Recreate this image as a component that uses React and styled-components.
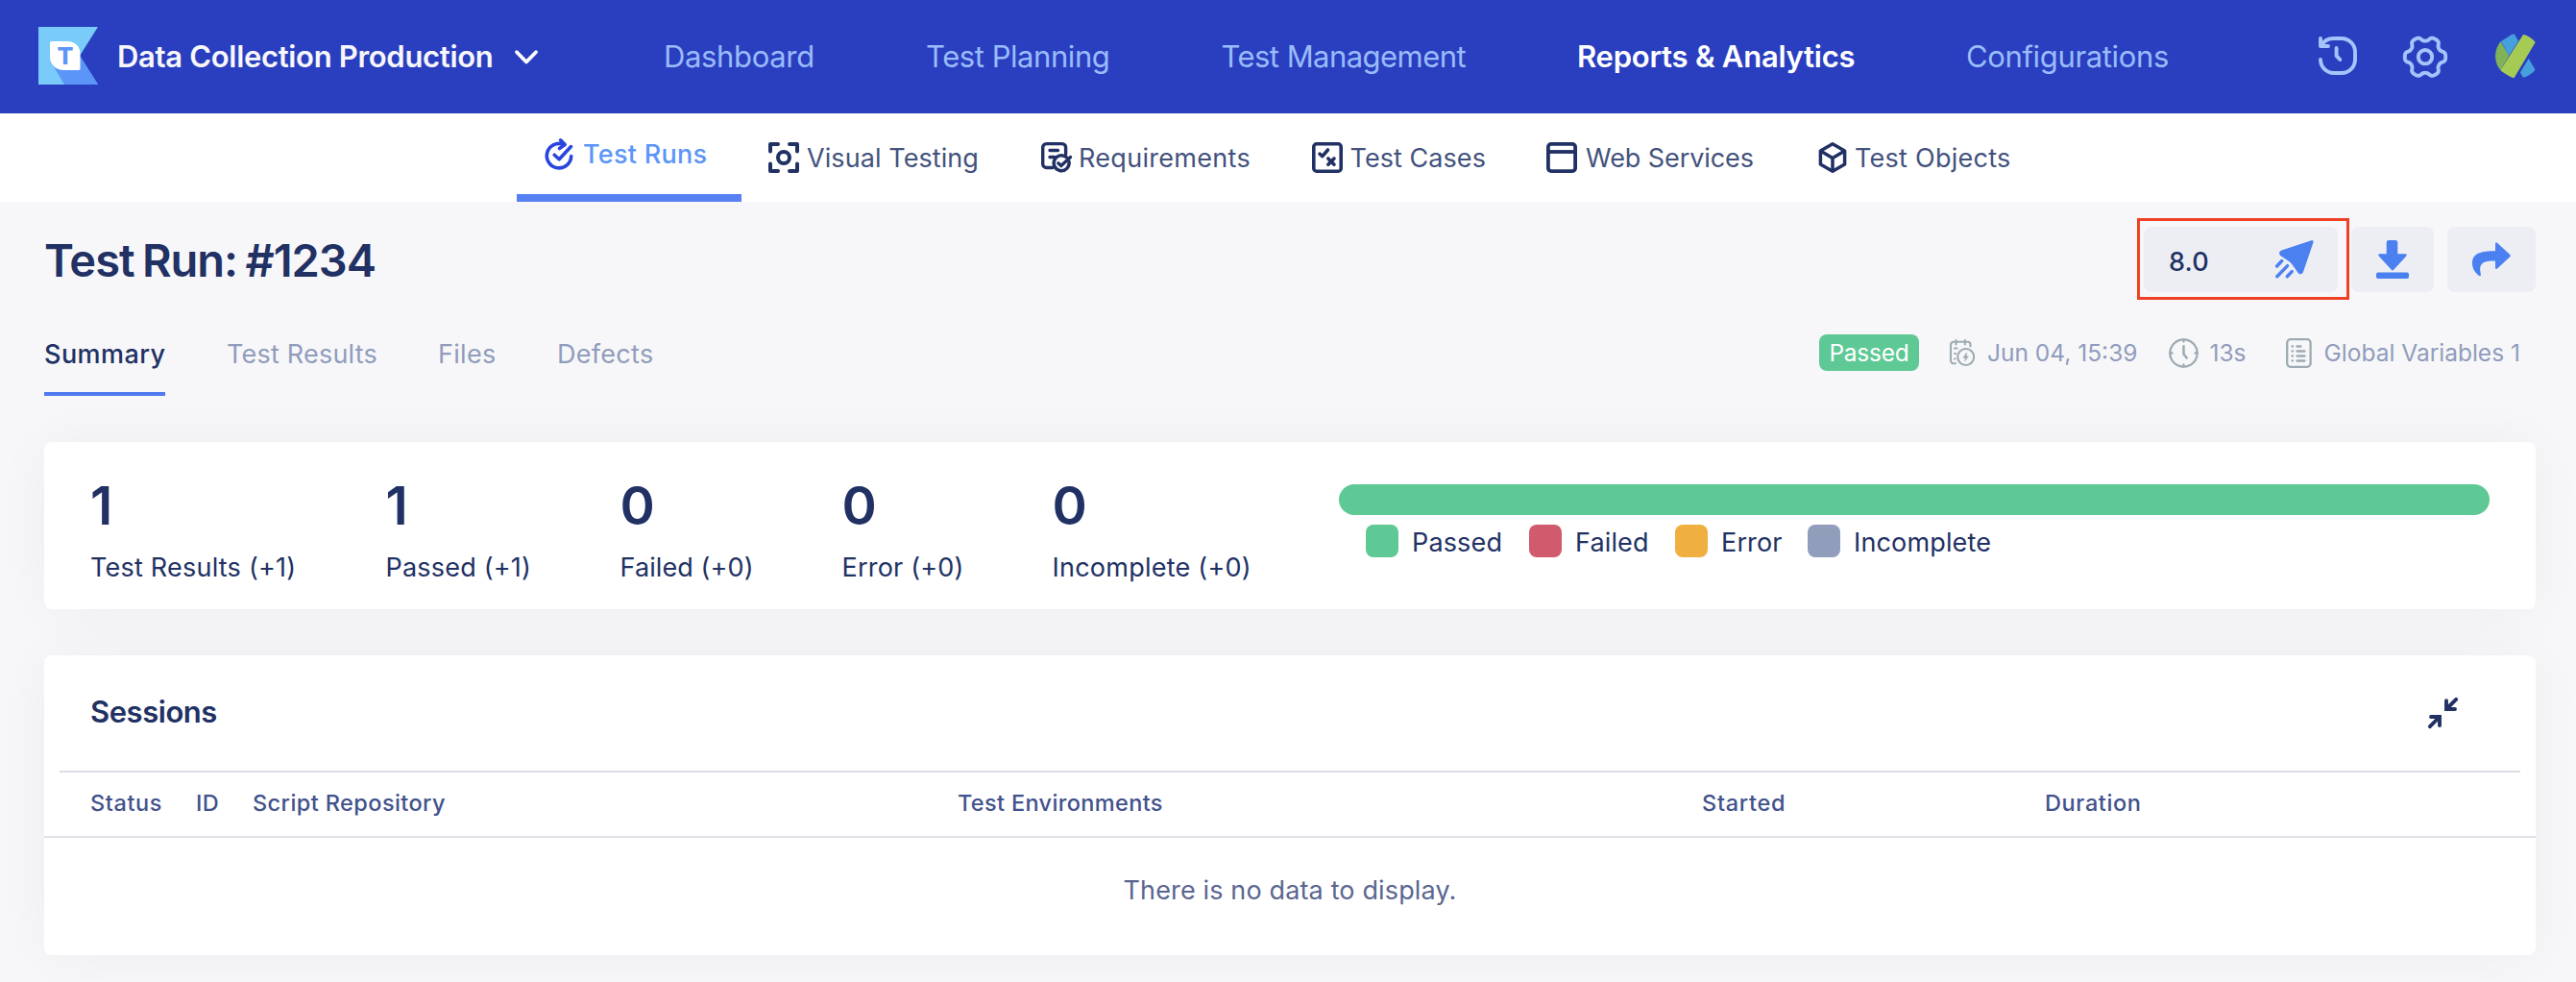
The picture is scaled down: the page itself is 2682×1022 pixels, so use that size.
import React from "react";
import styled, { createGlobalStyle } from "styled-components";

const GlobalStyle = createGlobalStyle`
  *, *::before, *::after { box-sizing: border-box; }
  body {
    margin: 0;
    background: #f7f7f9;
    color: #213164;
    font-family: Inter, "Liberation Sans", sans-serif;
  }
  svg { display: block; flex: none; overflow: visible; }
`;

const Page = styled.div`
  width: 2682px;
  height: 1022px;
  overflow: hidden;
  display: flex;
  flex-direction: column;
`;

/* ---------- top bar ---------- */

const TopBar = styled.header`
  flex: none;
  height: 118px;
  padding: 0 42px 0 40px;
  display: flex;
  align-items: center;
  background: #2a3fbf;
`;

const Brand = styled.div`
  width: 651px;
  display: flex;
  align-items: center;
`;

const BrandName = styled.span`
  width: 414px;
  margin-left: 20px;
  font-size: 31px;
  font-weight: 600;
  line-height: 40px;
  letter-spacing: -0.32px;
  white-space: nowrap;
  color: #f7f7fb;
`;

const MainNav = styled.nav`
  display: flex;
`;

const MainNavLink = styled.a`
  width: ${(p) => p.$width}px;
  font-size: 31px;
  font-weight: ${(p) => (p.$active ? 600 : 400)};
  line-height: 40px;
  letter-spacing: ${(p) => p.$track}px;
  white-space: nowrap;
  color: ${(p) => (p.$active ? "#ffffff" : "#99bcfb")};
`;

const Tools = styled.div`
  margin-left: auto;
  display: flex;
  align-items: center;
`;

const Tool = styled.div`
  margin-left: ${(p) => p.$gap}px;
  padding-bottom: ${(p) => p.$lift || 0}px;
`;

/* ---------- report type tabs ---------- */

const SubNav = styled.nav`
  flex: none;
  height: 92px;
  padding-left: 538px;
  display: flex;
  background: #ffffff;
`;

const SubNavItem = styled.a`
  width: ${(p) => p.$width}px;
  height: 92px;
  padding-left: 28px;
  display: flex;
  align-items: center;
  gap: ${(p) => p.$gap}px;
  border-bottom: ${(p) => (p.$active ? "8px solid #5780f2" : "none")};
  color: ${(p) => (p.$active ? "#5c95f8" : "#43527d")};
  font-size: 27px;
  font-weight: ${(p) => (p.$active ? 500 : 400)};
  letter-spacing: ${(p) => p.$track}px;
  line-height: 32px;
  white-space: nowrap;
`;

const SubNavLabel = styled.span`
  padding-top: 2px;
`;

/* ---------- page heading ---------- */

const Content = styled.main`
  padding: 26px 42px 0 46px;
  display: flex;
  flex-direction: column;
`;

const TitleRow = styled.div`
  height: 68px;
  display: flex;
  align-items: center;
  justify-content: space-between;
`;

const Title = styled.h1`
  margin: 2px 0 0;
  font-size: 47px;
  font-weight: 600;
  line-height: 60px;
  letter-spacing: -1px;
  word-spacing: -2.5px;
`;

const Actions = styled.div`
  display: flex;
  gap: 14px;
`;

const ActionButton = styled.div`
  position: relative;
  width: ${(p) => p.$width}px;
  height: 68px;
  display: flex;
  align-items: center;
  justify-content: center;
  border-radius: 8px;
  background: #edeef4;
`;

const ReleaseButton = styled(ActionButton)`
  justify-content: space-between;
  padding: 0 25px 0 26px;
  font-size: 27px;
  font-weight: 500;
  letter-spacing: 0.2px;
`;

const ReleaseName = styled.span`
  padding-top: 5px;
  line-height: 32px;
`;

const Highlight = styled.div`
  position: absolute;
  inset: -9px -12px -8px -7px;
  border: 3px solid #ee4126;
`;

const TabRow = styled.div`
  height: 64px;
  margin-top: 44px;
  display: flex;
  justify-content: space-between;
  align-items: flex-start;
`;

const Tabs = styled.div`
  display: flex;
  gap: 64px;
`;

const Tab = styled.a`
  width: ${(p) => p.$width}px;
  height: 64px;
  padding-top: 5px;
  border-bottom: 4px solid ${(p) => (p.$active ? "#5179f0" : "transparent")};
  font-size: 27px;
  font-weight: ${(p) => (p.$active ? 500 : 400)};
  line-height: 32px;
  letter-spacing: ${(p) => p.$track}px;
  white-space: nowrap;
  color: ${(p) => (p.$active ? "#213164" : "#909cbc")};
`;

const Meta = styled.div`
  height: 38px;
  display: flex;
  align-items: center;
  font-size: 24.5px;
  line-height: 38px;
  color: #909cbc;
  white-space: nowrap;
`;

const StatusBadge = styled.span`
  width: 104px;
  height: 38px;
  margin-right: 32px;
  border-radius: 8px;
  text-align: center;
  letter-spacing: -0.25px;
  background: #5ec995;
  color: #ffffff;
`;

const MetaItem = styled.span`
  width: ${(p) => p.$width}px;
  display: flex;
  align-items: center;
  gap: ${(p) => p.$gap}px;
`;

/* ---------- cards ---------- */

const Card = styled.section`
  height: ${(p) => p.$height}px;
  margin-top: 48px;
  border-radius: 8px;
  background: #ffffff;
  box-shadow: 0 0 60px rgba(30, 34, 50, 0.045);
`;

const SummaryCard = styled(Card)`
  padding: 34px 48px 27px;
  display: flex;
`;

const Stat = styled.div`
  width: ${(p) => p.$width}px;
  display: flex;
  flex-direction: column;
  gap: 17px;
`;

const StatValue = styled.span`
  font-size: 55px;
  font-weight: 600;
  line-height: 64px;
`;

const StatLabel = styled.span`
  font-size: 27px;
  line-height: 32px;
  letter-spacing: ${(p) => p.$track}px;
  white-space: nowrap;
`;

const Chart = styled.div`
  flex: 1;
  padding-top: 10px;
  display: flex;
  flex-direction: column;
  gap: 10px;
`;

const Bar = styled.div`
  height: 32px;
  border-radius: 16px;
  background: #5ec995;
`;

const Legend = styled.div`
  padding-left: 28px;
  display: flex;
`;

const LegendItem = styled.div`
  width: ${(p) => p.$width}px;
  height: 34px;
  display: flex;
  align-items: center;
  gap: 14px;
  font-size: 27px;
  line-height: 36px;
  letter-spacing: 0.15px;
`;

const LegendLabel = styled.span`
  padding-top: 3px;
`;

const Swatch = styled.span`
  flex: none;
  width: 34px;
  height: 34px;
  border-radius: 8px;
  background: ${(p) => p.$color};
`;

const CardHeader = styled.div`
  height: 122px;
  margin: 0 16px;
  padding: 0 64px 0 32px;
  display: flex;
  align-items: center;
  justify-content: space-between;
  border-bottom: 2px solid #dcdce4;
`;

const CardTitle = styled.h2`
  margin: 0 0 2px;
  font-size: 31px;
  font-weight: 600;
  line-height: 40px;
  letter-spacing: -0.45px;
`;

const TableHead = styled.div`
  height: 68px;
  padding: 0 0 3px 48px;
  display: grid;
  grid-template-columns: 110px 59px 734px 775px 357px 1fr;
  align-items: center;
  border-bottom: 2px solid #dee2e6;
`;

const HeadCell = styled.span`
  font-size: 23.5px;
  font-weight: 500;
  line-height: 30px;
  letter-spacing: ${(p) => p.$track}px;
  white-space: nowrap;
  color: #42528c;
`;

const EmptyState = styled.div`
  height: 122px;
  padding-bottom: 14px;
  display: flex;
  align-items: center;
  justify-content: center;
  font-size: 27px;
  letter-spacing: 0.14px;
  color: #5b6690;
`;

/* ---------- icons ---------- */

const NAVY = "#213164";

const LogoIcon = () => (
  <svg width="62" height="62" viewBox="0 0 62 62">
    <path d="M0 0H62L43 30 62 60H0Z" fill="#79cbfa" />
    <path d="M43 30 62 60H27L14 38Z" fill="#5c95f8" />
    <path d="M13.5 15H30C38 15 43.5 20.5 43.5 28V43.5Q43.500 45 42 45H26.500C18 45 12 39 12 31V16.500Q12 15 13.500 15Z" fill="#fff" />
    <text x="28" y="39" textAnchor="middle" fontFamily="Inter" fontWeight="800" fontSize="25" fill="#5c95f8">T</text>
  </svg>
);

const ChevronIcon = () => (
  <svg width="24" height="15" viewBox="0 0 24 15" fill="none" stroke="#fff" strokeWidth="3.8" strokeLinecap="round" strokeLinejoin="round">
    <path d="M2 2.200 12 12.500 22 2.200" />
  </svg>
);

const HistoryIcon = () => (
  <svg width="40" height="40" viewBox="0 0 40 40" fill="none" stroke="#a5c4fb" strokeWidth="3.9" strokeLinecap="round" strokeLinejoin="round">
    <path d="M2 24A14 14 0 0 0 16 38H24A14 14 0 0 0 38 24V16A14 14 0 0 0 24 2H16C10 2 5.500 4.500 3.500 9" />
    <path d="M2 2V10H10" />
    <path d="M18.600 12V20.200L22.300 24" />
  </svg>
);

const gearPath = (() => {
  const points = [];
  for (let i = 0; i < 180; i += 1) {
    const a = (i / 180) * Math.PI * 2;
    const r = 18.8 + 2.5 * Math.tanh(1.7 * Math.cos(6 * a) + 0.35);
    points.push(`${(23 + r * Math.cos(a)).toFixed(2)} ${(22.200 + r * Math.sin(a)).toFixed(2)}`);
  }
  return `M${points.join("L")}Z`;
})();

const GearIcon = () => (
  <svg width="46" height="44" viewBox="0 0 46 44" fill="none" stroke="#a5c4fb" strokeWidth="3.9" strokeLinejoin="round">
    <path d={gearPath} />
    <circle cx="23" cy="22.200" r="7.200" />
  </svg>
);

const AvatarIcon = () => (
  <svg width="42" height="47" viewBox="0 0 42 47">
    <clipPath id="avatar-clip">
      <circle cx="23.300" cy="23.300" r="23.300" />
    </clipPath>
    <g clipPath="url(#avatar-clip)">
      <path d="M5.500 8 14.300 23 5 38.500-2 38V8Z" fill="#7fb259" />
      <path d="M6 8 19.300-.5 24 7.700 14.300 23Z" fill="#47a0de" />
      <path d="M30 -.5 42.300 8 19 47 5 38.500Z" fill="#a5cb55" />
      <path d="M34.700 26 42.300 38.700 29.500 47 26 40.200Z" fill="#47a0de" />
    </g>
  </svg>
);

const TestRunsIcon = () => (
  <svg width="32" height="32" viewBox="0 0 32 32" fill="none" stroke="#2a45dd" strokeWidth="3.6" strokeLinecap="round" strokeLinejoin="round">
    <path d="M20.500 6.300A12.700 12.700 0 1 0 28.700 18.500" />
    <path d="M17.600 1.800 22.200 6.500 16.500 10.500" />
    <path d="M11.200 17.200 16.200 21.800 28.500 8.600" />
  </svg>
);

const VisualIcon = () => (
  <svg width="32" height="32" viewBox="0 0 32 32" fill="none" stroke={NAVY} strokeWidth="4" strokeLinecap="round" strokeLinejoin="round">
    <path d="M2 9.500V2H10M22 2H30V9.500M30 22.500V30H22M10 30H2V22.500" />
    <circle cx="16" cy="16" r="6" />
  </svg>
);

const RequirementsIcon = () => (
  <svg width="32" height="32" viewBox="0 0 32 32" fill="none" stroke={NAVY} strokeWidth="3.4" strokeLinecap="round" strokeLinejoin="round">
    <path d="M12 26.500H5.500A3.800 3.800 0 0 1 1.700 22.700V5.400A3.800 3.800 0 0 1 5.500 1.600H21.800A3.800 3.800 0 0 1 25.600 5.400V12.500" />
    <path d="M9 8.500H17.500M9 15.500H14" />
    <path d="M26.500 15.800A8 8 0 1 0 29 20.200" />
    <path d="M17.800 21.800 20.800 24.600 30.500 15.500" />
  </svg>
);

const TestCasesIcon = () => (
  <svg width="32" height="32" viewBox="0 0 32 32" fill="none" stroke={NAVY} strokeWidth="3.6" strokeLinecap="round" strokeLinejoin="round">
    <rect x="1.800" y="1.800" width="28.400" height="28.400" rx="3" />
    <path d="M8 12.200 10.800 14.600 16.500 8M16.800 17 23 23.200M23 17 16.800 23.200" strokeWidth="3.600" />
  </svg>
);

const WebServicesIcon = () => (
  <svg width="32" height="32" viewBox="0 0 32 32" fill="none" stroke={NAVY} strokeWidth="3.8">
    <rect x="1.900" y="1.900" width="28.200" height="28.200" rx="3" />
    <path d="M2 10H30" />
  </svg>
);

const TestObjectsIcon = () => (
  <svg width="32" height="32" viewBox="0 0 32 32" fill="none" stroke={NAVY} strokeWidth="3.500" strokeLinejoin="round">
    <path d="M16 1.800 28.600 8.900V23.100L16 30.200 3.400 23.100V8.900Z" />
    <path d="M3.400 8.900 16 16.400 28.600 8.900M16 16.400V30" />
  </svg>
);

const SendIcon = () => (
  <svg width="40" height="40" viewBox="0 0 40 40">
    <path d="M37.500 .2Q39.800 -.3 39.500 2.200L29 33C28 35.800 24.800 36 23.300 33.500L18.500 26.800Q17.200 24.200 14.500 22.300L6 16.500C3.300 14.600 3.500 11.600 6.500 10.500Z" fill="#4a80f0" />
    <path d="M1.600 27 6.800 21.500M1.800 37.700 12.600 26.600M12.300 37.700 17.200 32.600" fill="none" stroke="#4a80f0" strokeWidth="3.400" strokeLinecap="round" />
  </svg>
);

const DownloadIcon = () => (
  <svg width="34" height="40" viewBox="0 0 34 40" fill="#4a80f0">
    <path d="M13 0H20Q22.300 0 22.300 2.300V14.300H30.500Q32.500 14.600 31.300 16.500L18.200 30.800Q17 32 15.800 30.800L2.700 16.500Q1.500 14.600 3.500 14.300H10.700V2.300Q10.700 0 13 0Z" />
    <rect x="0" y="33.600" width="34" height="6.400" rx="2" />
  </svg>
);

const ShareIcon = () => (
  <svg width="40" height="36" viewBox="0 0 40 36" fill="#4a80f0">
    <path d="M24 1.500Q24.300 -.6 26 .8L39 12.700Q40.500 14.100 39 15.500L26 27.400Q24.300 28.800 24 26.700V19.500C11.500 19.500 6 21.500 8.900 33.500Q9 36.300 6.800 34.800C2 31 0 26.500 0 22C0 11 9.500 9.200 24 9.200Z" />
  </svg>
);

const CalendarIcon = () => (
  <svg width="26" height="29" viewBox="0 0 26 29" fill="none" stroke="#9dabb3" strokeWidth="2.100" strokeLinecap="round" strokeLinejoin="round">
    <path d="M6 25.300H4A3 3 0 0 1 1 22.300V5.800A3 3 0 0 1 4 2.800H18.500A3 3 0 0 1 21.500 5.800V7.500" />
    <path d="M6.500 1V5.500M15.800 1V5.500" />
    <path d="M5 9.500H7.500M5 15H6M5 20.500H5.500" />
    <circle cx="16.700" cy="18.500" r="8.500" />
    <path d="M17.500 14.200 14 19.200H16.200L15.800 22.800 19.400 17.800H17.200Z" fill="#9dabb3" strokeWidth=".6" />
  </svg>
);

const ClockIcon = () => (
  <svg width="31" height="31" viewBox="0 0 31 31" fill="none" stroke="#9dabb3" strokeWidth="2.300" strokeLinecap="round" strokeLinejoin="round">
    <circle cx="15.500" cy="15.500" r="14.200" />
    <path d="M15.500 1.500V3.500M15.500 27.500V29.500M1.500 15.500H3.500M27.500 15.500H29.500" />
    <path d="M15.500 8.200V16.500L18.700 20.500" strokeWidth="2.500" />
  </svg>
);

const ListIcon = () => (
  <svg width="27" height="31" viewBox="0 0 27 31" fill="none" stroke="#9dabb3" strokeWidth="2.300" strokeLinecap="round">
    <rect x="1.200" y="1.200" width="24.400" height="28.600" rx="3.500" />
    <path d="M6.500 8.500H7M6.500 13.500H7M6.500 18.500H7M6.500 23.500H7M11.500 8.500H15.500M11.500 13.500H19.500M11.500 18.500H19.500M11.500 23.500H19.500" />
  </svg>
);

const CollapseIcon = () => (
  <svg width="32" height="32" viewBox="0 0 32 32" fill="none" stroke={NAVY} strokeWidth="3.900" strokeLinecap="round" strokeLinejoin="miter">
    <path d="M29.200 1.800 20 11M19 3.300V12H28" />
    <path d="M1.900 30.200 11 21M3 20H12V29" />
  </svg>
);

/* ---------- content ---------- */

const mainNav = [
  { label: "Dashboard", width: 273, track: -0.34 },
  { label: "Test Planning", width: 307.5, track: -0.44 },
  { label: "Test Management", width: 370.5, track: -0.55 },
  { label: "Reports & Analytics", width: 405, track: -0.23, active: true },
  { label: "Configurations", width: 212, track: -0.35 },
];

const subNav = [
  { label: "Test Runs", width: 234, gap: 9, track: 0.28, Icon: TestRunsIcon, active: true },
  { label: "Visual Testing", width: 284, gap: 8, track: 0.08, Icon: VisualIcon },
  { label: "Requirements", width: 282, gap: 7, track: 0.3, Icon: RequirementsIcon },
  { label: "Test Cases", width: 244, gap: 7.5, track: 0.06, Icon: TestCasesIcon },
  { label: "Web Services", width: 282, gap: 9, track: -0.08, Icon: WebServicesIcon },
  { label: "Test Objects", width: 240, gap: 7, track: 0.26, Icon: TestObjectsIcon },
];

const tabs = [
  { label: "Summary", width: 126, track: 0.44, active: true },
  { label: "Test Results", width: 156, track: 0.21 },
  { label: "Files", width: 60, track: 0.3 },
  { label: "Defects", width: 100, track: 0.3 },
];

const stats = [
  { value: 1, label: "Test Results (+1)", width: 307.5, track: 0.22 },
  { value: 1, label: "Passed (+1)", width: 244, track: 0.2 },
  { value: 0, label: "Failed (+0)", width: 231, track: 0.1 },
  { value: 0, label: "Error (+0)", width: 219, track: 0.2 },
  { value: 0, label: "Incomplete (+0)", width: 298.5, track: 0.24 },
];

const legend = [
  { label: "Passed", width: 170, color: "#5ec995" },
  { label: "Failed", width: 152, color: "#d15a6c" },
  { label: "Error", width: 138, color: "#f0b041" },
  { label: "Incomplete", width: 200, color: "#909dbb" },
];

const columns = [
  { label: "Status", track: 0.59 },
  { label: "ID", track: 0.4 },
  { label: "Script Repository", track: 0.42 },
  { label: "Test Environments", track: 0.35 },
  { label: "Started", track: 0.7 },
  { label: "Duration", track: 0.6 },
];

export default function App() {
  return (
    <Page>
      <GlobalStyle />
      <TopBar>
        <Brand>
          <LogoIcon />
          <BrandName>Data Collection Production</BrandName>
          <ChevronIcon />
        </Brand>
        <MainNav>
          {mainNav.map((n) => (
            <MainNavLink key={n.label} $width={n.width} $track={n.track} $active={n.active}>
              {n.label}
            </MainNavLink>
          ))}
        </MainNav>
        <Tools>
          <Tool $gap={0} $lift={2}><HistoryIcon /></Tool>
          <Tool $gap={48}><GearIcon /></Tool>
          <Tool $gap={50} $lift={2}><AvatarIcon /></Tool>
        </Tools>
      </TopBar>

      <SubNav>
        {subNav.map(({ label, width, gap, track, active, Icon }) => (
          <SubNavItem key={label} $width={width} $gap={gap} $track={track} $active={active}>
            <Icon />
            <SubNavLabel>{label}</SubNavLabel>
          </SubNavItem>
        ))}
      </SubNav>

      <Content>
        <TitleRow>
          <Title>Test Run: #1234</Title>
          <Actions>
            <ReleaseButton $width={202}>
              <ReleaseName>8.0</ReleaseName>
              <SendIcon />
              <Highlight />
            </ReleaseButton>
            <ActionButton $width={86}><DownloadIcon /></ActionButton>
            <ActionButton $width={92}><ShareIcon /></ActionButton>
          </Actions>
        </TitleRow>

        <TabRow>
          <Tabs>
            {tabs.map((t) => (
              <Tab key={t.label} $width={t.width} $track={t.track} $active={t.active}>
                {t.label}
              </Tab>
            ))}
          </Tabs>
          <Meta>
            <StatusBadge>Passed</StatusBadge>
            <MetaItem $width={228} $gap={13}><CalendarIcon />Jun 04, 15:39</MetaItem>
            <MetaItem $width={121.5} $gap={11.5}><ClockIcon />13s</MetaItem>
            <MetaItem $width={260.5} $gap={13}><ListIcon />Global Variables 1</MetaItem>
          </Meta>
        </TabRow>

        <SummaryCard $height={174}>
          {stats.map((s) => (
            <Stat key={s.label} $width={s.width}>
              <StatValue>{s.value}</StatValue>
              <StatLabel $track={s.track}>{s.label}</StatLabel>
            </Stat>
          ))}
          <Chart>
            <Bar />
            <Legend>
              {legend.map((l) => (
                <LegendItem key={l.label} $width={l.width}>
                  <Swatch $color={l.color} />
                  <LegendLabel>{l.label}</LegendLabel>
                </LegendItem>
              ))}
            </Legend>
          </Chart>
        </SummaryCard>

        <Card $height={312}>
          <CardHeader>
            <CardTitle>Sessions</CardTitle>
            <CollapseIcon />
          </CardHeader>
          <TableHead>
            {columns.map((c) => (
              <HeadCell key={c.label} $track={c.track}>{c.label}</HeadCell>
            ))}
          </TableHead>
          <EmptyState>There is no data to display.</EmptyState>
        </Card>
      </Content>
    </Page>
  );
}
